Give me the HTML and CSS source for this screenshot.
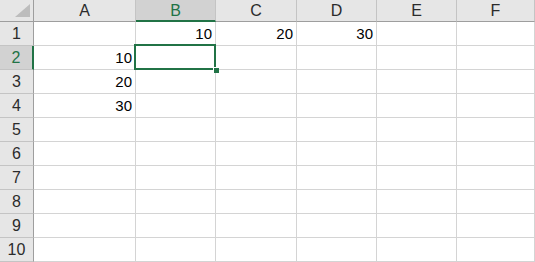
FILE: index.html
```html
<!DOCTYPE html>
<html lang="en">
<head>
  <meta charset="UTF-8">
  <title>Sheet1</title>
  <link rel="stylesheet" href="styles.css">
</head>
<body>

<div class="sheet">
  <div class="hd corner"><span class="tri"></span></div>
  <div class="hd col">A</div>
  <div class="hd col sel-col">B</div>
  <div class="hd col">C</div>
  <div class="hd col">D</div>
  <div class="hd col">E</div>
  <div class="hd col">F</div>

  <div class="hd row">1</div>
  <div class="c"></div><div class="c">10</div><div class="c">20</div><div class="c">30</div><div class="c"></div><div class="c"></div>

  <div class="hd row sel-row">2</div>
  <div class="c">10</div><div class="c active"></div><div class="c"></div><div class="c"></div><div class="c"></div><div class="c"></div>

  <div class="hd row">3</div>
  <div class="c">20</div><div class="c"></div><div class="c"></div><div class="c"></div><div class="c"></div><div class="c"></div>

  <div class="hd row">4</div>
  <div class="c">30</div><div class="c"></div><div class="c"></div><div class="c"></div><div class="c"></div><div class="c"></div>

  <div class="hd row">5</div>
  <div class="c"></div><div class="c"></div><div class="c"></div><div class="c"></div><div class="c"></div><div class="c"></div>

  <div class="hd row">6</div>
  <div class="c"></div><div class="c"></div><div class="c"></div><div class="c"></div><div class="c"></div><div class="c"></div>

  <div class="hd row">7</div>
  <div class="c"></div><div class="c"></div><div class="c"></div><div class="c"></div><div class="c"></div><div class="c"></div>

  <div class="hd row">8</div>
  <div class="c"></div><div class="c"></div><div class="c"></div><div class="c"></div><div class="c"></div><div class="c"></div>

  <div class="hd row">9</div>
  <div class="c"></div><div class="c"></div><div class="c"></div><div class="c"></div><div class="c"></div><div class="c"></div>

  <div class="hd row">10</div>
  <div class="c"></div><div class="c"></div><div class="c"></div><div class="c"></div><div class="c"></div><div class="c"></div>
</div>

</body>
</html>
```

FILE: styles.css
```css
body {
  margin: 0;
  background: #fff;
  font-family: "Liberation Sans", Arial, sans-serif;
  overflow: hidden;
}

.sheet {
  display: grid;
  grid-template-columns: 34px 102px 80px 81px 80px 80px 1fr;
  grid-template-rows: 22px repeat(10, 24px);
  width: 535px;
}

.sheet > div {
  box-sizing: border-box;
}

.hd {
  background: #e6e6e6;
  color: #2b2b2b;
  display: flex;
  align-items: center;
  justify-content: center;
}

.col {
  font-size: 16px;
  border-right: 1px solid #c4c4c4;
  border-bottom: 1px solid #9e9e9e;
  padding-top: 1px;
}

.row {
  font-size: 16px;
  border-right: 1px solid #9e9e9e;
  border-bottom: 1px solid #c4c4c4;
}

.corner {
  position: relative;
  border-right: 1px solid #9e9e9e;
  border-bottom: 1px solid #9e9e9e;
}

.tri {
  position: absolute;
  right: 3px;
  bottom: 4px;
  width: 0;
  height: 0;
  border-left: 15px solid transparent;
  border-bottom: 13px solid #bdbdbd;
}

.sel-col {
  background: #d2d2d2;
  color: #217346;
  border-bottom: 2px solid #217346;
  padding-top: 2px;
}

.sel-row {
  background: #d2d2d2;
  color: #217346;
  border-right: 2px solid #217346;
}

.c {
  border-right: 1px solid #d4d4d4;
  border-bottom: 1px solid #d4d4d4;
  font-size: 15px;
  color: #000;
  text-align: right;
  padding: 3px 3px 0 0;
}

.active {
  position: relative;
}

.active::before {
  content: "";
  position: absolute;
  left: -2px;
  top: -2px;
  right: -1px;
  bottom: -1px;
  border: 2px solid #217346;
}

.active::after {
  content: "";
  position: absolute;
  right: -4px;
  bottom: -4px;
  width: 5px;
  height: 5px;
  background: #217346;
  border-left: 1px solid #fff;
  border-top: 1px solid #fff;
}
```
